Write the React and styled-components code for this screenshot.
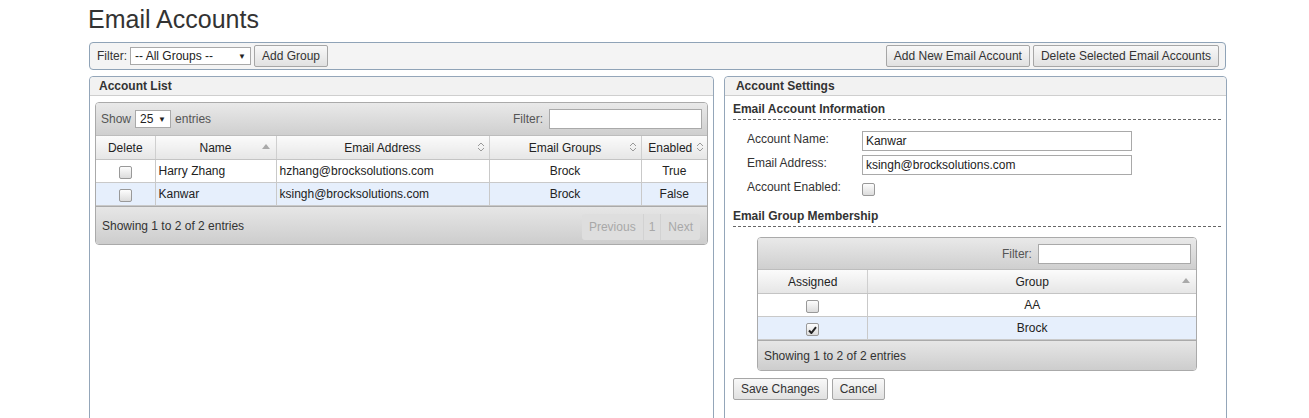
import styled, { createGlobalStyle } from 'styled-components'

const GlobalStyle = createGlobalStyle`
  html, body {
    margin: 0;
    padding: 0;
    background: #fff;
    font-family: 'Liberation Sans', Arial, sans-serif;
    font-size: 12px;
    color: #333;
  }
`

const Page = styled.div`
  width: 1139px;
  margin-left: 88px;
  height: 418px;
  overflow: hidden;
`

const Title = styled.h1`
  margin: 0;
  padding-top: 5px;
  height: 42px;
  box-sizing: border-box;
  font-size: 25px;
  font-weight: normal;
  line-height: 28px;
  color: #333;
`

const Toolbar = styled.div`
  display: flex;
  align-items: center;
  justify-content: space-between;
  width: 1137px;
  height: 28px;
  box-sizing: border-box;
  margin-left: 1px;
  padding: 0 6px 0 7px;
  border: 1px solid #8fa3b7;
  border-radius: 4px;
  background: #f4f4f4;
`

const ToolGroup = styled.div`
  display: flex;
  align-items: center;
  gap: 3px;
`

const Label = styled.span`
  color: #333;
`

const FakeSelect = styled.div`
  display: flex;
  align-items: center;
  justify-content: space-between;
  width: ${p => p.$w}px;
  height: 18px;
  box-sizing: border-box;
  padding: 0 4px 0 4px;
  border: 1px solid #a9a9a9;
  background: #fff;
  color: #222;
  font-size: 12px;
`

const Arrow = styled.span`
  font-size: 8px;
  color: #222;
`

const Button = styled.button`
  height: 22px;
  padding: 0 7px;
  border: 1px solid #a6a6a6;
  border-radius: 2px;
  background: linear-gradient(#f8f8f8, #e1e1e1);
  font-family: 'Liberation Sans', Arial, sans-serif;
  font-size: 12px;
  color: #333;
`

const Columns = styled.div`
  display: flex;
  gap: 10px;
  margin-top: 6px;
  margin-left: 1px;
`

const Panel = styled.section`
  width: ${p => p.$w}px;
  height: 360px;
  box-sizing: border-box;
  border: 1px solid #94a6b9;
  border-radius: 4px 4px 0 0;
`

const PanelHeader = styled.div`
  height: 18px;
  line-height: 18px;
  padding-left: ${p => p.$pl || 9}px;
  background: #f2f2f2;
  border-bottom: 1px solid #cfcfcf;
  border-radius: 4px 4px 0 0;
  font-weight: bold;
  color: #333;
`

const DataWrap = styled.div`
  margin: ${p => p.$m};
  width: ${p => p.$w}px;
  border: 1px solid #aaa;
  border-radius: 4px;
  overflow: hidden;
`

const TopBar = styled.div`
  display: flex;
  align-items: center;
  justify-content: ${p => p.$end ? 'flex-end' : 'space-between'};
  height: ${p => p.$h}px;
  padding: 0 5px;
  background: linear-gradient(#e9e9e9, #cfcfcf);
  border-bottom: 1px solid #bdbdbd;
  color: #555;
`

const Inline = styled.div`
  display: flex;
  align-items: center;
  gap: 4px;
`

const FilterInput = styled.input`
  width: ${p => p.$w}px;
  height: 20px;
  box-sizing: border-box;
  border: 1px solid #a9a9a9;
  background: #fff;
  margin-left: 2px;
`

const Table = styled.table`
  width: 100%;
  border-collapse: collapse;
  table-layout: fixed;
  font-size: 12px;
`

const Th = styled.th`
  position: relative;
  height: 23px;
  padding: 0 ${p => p.$pr || 4}px 0 4px;
  font-weight: normal;
  color: #222;
  text-align: center;
  background: linear-gradient(#fbfbfb, #e6e6e6);
  border-right: 1px solid #cfcfcf;
  border-bottom: 1px solid #c4c4c4;
  &:last-child { border-right: none; }
`

const SortIcon = styled.svg`
  position: absolute;
  right: ${p => p.$r || 6}px;
  top: 8px;
`

const Tr = styled.tr`
  background: ${p => p.$alt ? '#e6effc' : '#fff'};
`

const Td = styled.td`
  height: 22px;
  padding: 0 3px;
  text-align: ${p => p.$align || 'left'};
  color: #222;
  border-right: 1px solid #c9c9c9;
  border-bottom: 1px solid #c9c9c9;
  &:last-child { border-right: none; }
`

const Check = styled.span`
  display: inline-flex;
  align-items: center;
  justify-content: center;
  width: 11px;
  height: 11px;
  margin-top: ${p => p.$mt ?? 3}px;
  border: 1px solid #999;
  border-radius: 2px;
  background: linear-gradient(#fdfdfd, #dcdcdc);
  vertical-align: middle;
`

const Footer = styled.div`
  display: flex;
  align-items: ${p => p.$top ? 'flex-start' : 'center'};
  justify-content: space-between;
  height: ${p => p.$h}px;
  padding: 0 6px;
  background: linear-gradient(#e6e6e6, #cdcdcd);
  border-top: 1px solid #aaa;
  color: #333;
`

const FooterText = styled.span`
  margin-top: ${p => p.$mt || 0}px;
`

const Pager = styled.div`
  display: flex;
  height: 26px;
  margin-top: 7px;
  margin-right: 1px;
  border-radius: 3px;
  background: #dedede;
  overflow: hidden;
`

const PageBtn = styled.span`
  display: flex;
  align-items: center;
  padding: 0 ${p => p.$px || 7}px;
  color: #a8a8a8;
  border-right: 1px solid #d2d2d2;
  &:last-child { border-right: none; }
`

const SettingsBody = styled.div`
  padding: 6px 5px 0 8px;
`

const SectionTitle = styled.div`
  font-weight: bold;
  color: #333;
  padding-bottom: 3px;
  border-bottom: 1px dashed #666;
`

const FieldGrid = styled.div`
  display: grid;
  grid-template-columns: 115px 270px;
  grid-auto-rows: 20px;
  row-gap: 4px;
  padding: 11px 0 0 14px;
  height: 89px;
  box-sizing: border-box;
`

const FieldLabel = styled.div`
  color: #333;
  line-height: 16px;
`

const FieldInput = styled.input`
  width: 270px;
  height: 20px;
  box-sizing: border-box;
  padding: 0 3px;
  border: 1px solid #a9a9a9;
  font-family: 'Liberation Sans', Arial, sans-serif;
  font-size: 12px;
  color: #222;
`

const ButtonRow = styled.div`
  display: flex;
  gap: 4px;
  margin-top: 7px;
`

const upArrow = (
  <SortIcon width="8" height="5" viewBox="0 0 8 5">
    <path d="M0 5 L4 0 L8 5 Z" fill="#a9a9a9" />
  </SortIcon>
)

const bothArrow = r => (
  <SortIcon $r={r} width="8" height="10" viewBox="0 0 8 10" style={{ top: 6 }}>
    <path d="M1 4 L4 1 L7 4 M1 6 L4 9 L7 6" fill="none" stroke="#999" strokeWidth="1" />
  </SortIcon>
)

const CheckMark = () => (
  <svg width="9" height="8" viewBox="0 0 9 8">
    <path d="M1 4.5 L3.4 7 L8 1.2" fill="none" stroke="#222" strokeWidth="2" />
  </svg>
)

const accounts = [
  { name: 'Harry Zhang', email: 'hzhang@brocksolutions.com', group: 'Brock', enabled: 'True' },
  { name: 'Kanwar', email: 'ksingh@brocksolutions.com', group: 'Brock', enabled: 'False' },
]

const groups = [
  { name: 'AA', assigned: false },
  { name: 'Brock', assigned: true },
]

export default function App() {
  return (
    <Page>
      <GlobalStyle />
      <Title>Email Accounts</Title>
      <Toolbar>
        <ToolGroup>
          <Label>Filter:</Label>
          <FakeSelect $w={121}>
            <span>-- All Groups --</span>
            <Arrow>▼</Arrow>
          </FakeSelect>
          <Button>Add Group</Button>
        </ToolGroup>
        <ToolGroup>
          <Button>Add New Email Account</Button>
          <Button>Delete Selected Email Accounts</Button>
        </ToolGroup>
      </Toolbar>

      <Columns>
        <Panel $w={626}>
          <PanelHeader>Account List</PanelHeader>
          <DataWrap $m="6px 0 0 5px" $w={611}>
            <TopBar $h={32}>
              <Inline>
                <span>Show</span>
                <FakeSelect $w={36}>
                  <span>25</span>
                  <Arrow>▼</Arrow>
                </FakeSelect>
                <span>entries</span>
              </Inline>
              <Inline>
                <span>Filter:</span>
                <FilterInput $w={153} />
              </Inline>
            </TopBar>
            <Table>
              <colgroup>
                <col style={{ width: 59 }} />
                <col style={{ width: 121 }} />
                <col style={{ width: 213 }} />
                <col style={{ width: 152 }} />
                <col />
              </colgroup>
              <thead>
                <tr>
                  <Th>Delete</Th>
                  <Th>Name{upArrow}</Th>
                  <Th>Email Address{bothArrow(4)}</Th>
                  <Th>Email Groups{bothArrow(4)}</Th>
                  <Th $pr={12}>Enabled{bothArrow(3)}</Th>
                </tr>
              </thead>
              <tbody>
                {accounts.map((a, i) => (
                  <Tr key={a.name} $alt={i % 2 === 1}>
                    <Td $align="center"><Check /></Td>
                    <Td>{a.name}</Td>
                    <Td>{a.email}</Td>
                    <Td $align="center">{a.group}</Td>
                    <Td $align="center">{a.enabled}</Td>
                  </Tr>
                ))}
              </tbody>
            </Table>
            <Footer $h={37} $top>
              <FooterText $mt={12}>Showing 1 to 2 of 2 entries</FooterText>
              <Pager>
                <PageBtn>Previous</PageBtn>
                <PageBtn $px={5}>1</PageBtn>
                <PageBtn>Next</PageBtn>
              </Pager>
            </Footer>
          </DataWrap>
        </Panel>

        <Panel $w={504}>
          <PanelHeader $pl={11}>Account Settings</PanelHeader>
          <SettingsBody>
            <SectionTitle>Email Account Information</SectionTitle>
            <FieldGrid>
              <FieldLabel>Account Name:</FieldLabel>
              <FieldInput defaultValue="Kanwar" />
              <FieldLabel>Email Address:</FieldLabel>
              <FieldInput defaultValue="ksingh@brocksolutions.com" />
              <FieldLabel>Account Enabled:</FieldLabel>
              <div><Check $mt={4} /></div>
            </FieldGrid>
            <SectionTitle>Email Group Membership</SectionTitle>
            <DataWrap $m="10px 0 0 24px" $w={438}>
              <TopBar $h={31} $end>
                <Inline>
                  <span>Filter:</span>
                  <FilterInput $w={153} />
                </Inline>
              </TopBar>
              <Table>
                <colgroup>
                  <col style={{ width: 110 }} />
                  <col />
                </colgroup>
                <thead>
                  <tr>
                    <Th>Assigned</Th>
                    <Th>Group{upArrow}</Th>
                  </tr>
                </thead>
                <tbody>
                  {groups.map((g, i) => (
                    <Tr key={g.name} $alt={i % 2 === 1}>
                      <Td $align="center">
                        <Check>{g.assigned && <CheckMark />}</Check>
                      </Td>
                      <Td $align="center">{g.name}</Td>
                    </Tr>
                  ))}
                </tbody>
              </Table>
              <Footer $h={29}>
                <span>Showing 1 to 2 of 2 entries</span>
              </Footer>
            </DataWrap>
            <ButtonRow>
              <Button>Save Changes</Button>
              <Button>Cancel</Button>
            </ButtonRow>
          </SettingsBody>
        </Panel>
      </Columns>
    </Page>
  )
}
